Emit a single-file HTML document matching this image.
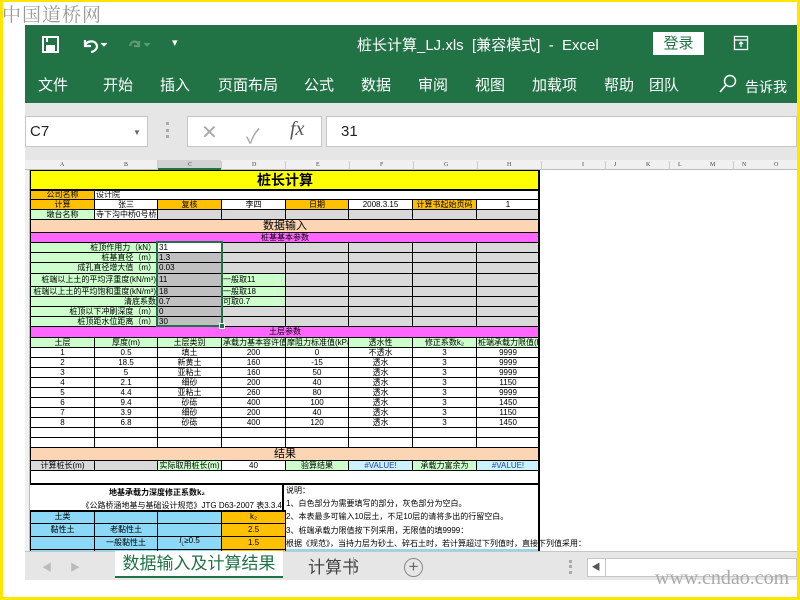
<!DOCTYPE html>
<html><head><meta charset="utf-8">
<style>
*{margin:0;padding:0;box-sizing:border-box}
body{width:800px;height:600px;overflow:hidden;background:#fff;position:relative;font-family:"Liberation Sans","Noto Sans CJK SC",sans-serif}
.a{position:absolute}
#ybor{position:absolute;left:0;top:0;width:800px;height:600px;border:3px solid #ffe600;border-top-width:2px;pointer-events:none;z-index:50}
.tb{background:#217346;color:#fff}
table{border-collapse:collapse;table-layout:fixed;position:absolute}
td{border:1px solid #000;font-size:8px;line-height:8px;text-align:center;white-space:nowrap;overflow:hidden;padding:0 1px}
.y{background:#ffff00}.o{background:#ffc000}.g{background:#ccffcc}.gr{background:#d9d9d9}.gc{background:#c0c0c0}.p{background:#fcd5b4}.m{background:#ff66ff}.lb{background:#ccf2ff;color:#2040a0}.bl{background:#8bd9f7}
.l{text-align:left}.r{text-align:right}
.tab{font-size:15px;position:absolute;top:74px;color:#fff}
</style></head><body>
<div id="ybor"></div>
<div class="a" style="left:2px;top:0;font-family:'Liberation Serif','Noto Serif CJK SC',serif;font-size:19px;color:#999;letter-spacing:1px">中国道桥网</div>

<!-- title bar -->
<div class="a tb" style="left:25px;top:25px;width:772px;height:78px"></div>
<svg class="a" style="left:41px;top:35px" width="20" height="20" viewBox="0 0 20 20" fill="none" stroke="#fff" stroke-width="2"><rect x="2" y="2" width="15" height="15"/><rect x="6" y="11" width="7" height="6" fill="#fff"/><line x1="6" y1="2" x2="6" y2="7"/></svg>
<svg class="a" style="left:80px;top:35px" width="30" height="20" viewBox="0 0 30 20" fill="none" stroke="#fff" stroke-width="2.2"><path d="M5 5 L5 11 L11 11 M5 10 C8 5 16 5 17 11 C17 15 13 17 11 17"/><path d="M21 8 l3 3 l3-3" fill="#fff" stroke-width="1"/></svg>
<svg class="a" style="left:122px;top:35px" width="30" height="20" viewBox="0 0 30 20" fill="none" stroke="#5c9a76" stroke-width="2.2"><path d="M17 11 C16 5 9 5 8 11 M17 6 L17 11 L12 11"/><path d="M22 8 l3 3 l3-3" fill="#5c9a76" stroke-width="1"/></svg>
<div class="a" style="left:172px;top:36px;color:#fff;font-size:11px">▾</div>
<div class="a" style="left:357px;top:34px;color:#fff;font-size:15px">桩长计算_LJ.xls&nbsp; [兼容模式]&nbsp; -&nbsp; Excel</div>
<div class="a" style="left:653px;top:32px;width:51px;height:23px;background:#fff;color:#217346;font-size:15px;text-align:center;line-height:23px">登录</div>
<svg class="a" style="left:733px;top:35px" width="16" height="16" fill="none" stroke="#fff" stroke-width="1.3"><rect x="1.5" y="1.5" width="13" height="13"/><line x1="1.5" y1="5" x2="14.5" y2="5"/><path d="M8 12V7M6 9l2-2 2 2"/></svg>
<div class="tab" style="left:38px">文件</div>
<div class="tab" style="left:103px">开始</div>
<div class="tab" style="left:160px">插入</div>
<div class="tab" style="left:218px">页面布局</div>
<div class="tab" style="left:304px">公式</div>
<div class="tab" style="left:361px">数据</div>
<div class="tab" style="left:418px">审阅</div>
<div class="tab" style="left:475px">视图</div>
<div class="tab" style="left:532px">加载项</div>
<div class="tab" style="left:604px">帮助</div>
<div class="tab" style="left:649px">团队</div>
<svg class="a" style="left:718px;top:74px" width="20" height="20" fill="none" stroke="#fff" stroke-width="1.5"><circle cx="12" cy="7" r="5.5"/><line x1="8" y1="11" x2="2" y2="18"/></svg>
<div class="tab" style="left:745px;top:77px;font-size:14px">告诉我</div>

<!-- formula bar -->
<div class="a" style="left:25px;top:103px;width:772px;height:57px;background:#e6e6e6"></div>
<div class="a" style="left:25px;top:116px;width:123px;height:31px;background:#fff;border:1px solid #c6c6c6;font-size:15px;line-height:29px;padding-left:4px;color:#222">C7</div>
<div class="a" style="left:133px;top:128px;font-size:8px;color:#666">▼</div>
<div class="a" style="left:166px;top:122px;width:3px;height:16px;border-left:3px dotted #aaa"></div>
<div class="a" style="left:187px;top:116px;width:135px;height:31px;background:#fff;border:1px solid #c6c6c6"></div>
<div class="a" style="left:201px;top:120px;font-size:20px;color:#aaa">✕</div>
<div class="a" style="left:246px;top:120px;font-size:20px;color:#aaa">✓</div>
<div class="a" style="left:290px;top:118px;font-size:20px;font-style:italic;font-family:'Liberation Serif',serif;color:#555">fx</div>
<div class="a" style="left:326px;top:116px;width:471px;height:31px;background:#fff;border:1px solid #c6c6c6;font-size:15px;line-height:29px;padding-left:14px;color:#222">31</div>

<!-- headers -->
<div class="a" style="left:25px;top:160px;width:772px;height:10px;background:#f0f0f0;border-bottom:1px solid #bbb"></div>
<div class="a" style="left:25px;top:170px;width:5px;height:381px;background:#f0f0f0;border-right:1px solid #bbb"></div>
<div class="a" style="left:157px;top:160px;width:64px;height:10px;background:#d2d2d2;border-bottom:2px solid #217346"></div>
<div class="a" style="left:30px;top:161px;width:770px;font-size:6px;color:#444;font-family:'Liberation Serif',serif;line-height:8px;white-space:nowrap">
<span class="a" style="left:30px">A</span><span class="a" style="left:94px">B</span><span class="a" style="left:158px">C</span><span class="a" style="left:222px">D</span><span class="a" style="left:286px">E</span><span class="a" style="left:350px">F</span><span class="a" style="left:414px">G</span><span class="a" style="left:477px">H</span><span class="a" style="left:552px">I</span><span class="a" style="left:584px">J</span><span class="a" style="left:616px">K</span><span class="a" style="left:648px">L</span><span class="a" style="left:680px">M</span><span class="a" style="left:712px">N</span><span class="a" style="left:744px">O</span></div>
<div class="a" style="left:94px;top:161px;width:700px;height:9px;background:repeating-linear-gradient(90deg,transparent 0 63px,#ccc 63px 64px);"></div>

<!-- grid -->
<table style="left:30px;top:170px;width:509px">
<colgroup><col style="width:64px"><col style="width:63px"><col style="width:64px"><col style="width:64px"><col style="width:63px"><col style="width:64px"><col style="width:64px"><col style="width:63px"></colgroup>
<tr style="height:19px"><td colspan="8" class="y" style="font-size:14px;line-height:14px;font-weight:bold;border-bottom:2px solid #000">桩长计算</td></tr>
<tr style="height:10px"><td class="o">公司名称</td><td colspan="7" class="l">设计院</td></tr>
<tr style="height:10px"><td class="o">计算</td><td>张三</td><td class="o">复核</td><td>李四</td><td class="o">日期</td><td>2008.3.15</td><td class="o">计算书起始页码</td><td>1</td></tr>
<tr style="height:10px"><td class="g">墩台名称</td><td>寺下沟中桥0号桥台</td><td class="gr"></td><td class="gr"></td><td class="gr"></td><td class="gr"></td><td class="gr"></td><td class="gr"></td></tr>
<tr style="height:13px"><td colspan="8" class="p" style="font-size:11px;line-height:11px">数据输入</td></tr>
<tr style="height:10px"><td colspan="8" class="m">桩基基本参数</td></tr>
<tr style="height:10px"><td colspan="2" class="g r">桩顶作用力（kN）</td><td class="l" style="background:#fff">31</td><td class="gr"></td><td class="gr"></td><td class="gr"></td><td class="gr"></td><td class="gr"></td></tr>
<tr style="height:10px"><td colspan="2" class="g r">桩基直径（m）</td><td class="gc l">1.3</td><td class="gr"></td><td class="gr"></td><td class="gr"></td><td class="gr"></td><td class="gr"></td></tr>
<tr style="height:11px"><td colspan="2" class="g r">成孔直径增大值（m）</td><td class="gc l">0.03</td><td class="gr"></td><td class="gr"></td><td class="gr"></td><td class="gr"></td><td class="gr"></td></tr>
<tr style="height:13px"><td colspan="2" class="g r">桩端以上土的平均浮重度(kN/m³)</td><td class="gc l">11</td><td class="g l">一般取11</td><td class="gr"></td><td class="gr"></td><td class="gr"></td><td class="gr"></td></tr>
<tr style="height:10px"><td colspan="2" class="g r">桩端以上土的平均饱和重度(kN/m³)</td><td class="gc l">18</td><td class="g l">一般取18</td><td class="gr"></td><td class="gr"></td><td class="gr"></td><td class="gr"></td></tr>
<tr style="height:10px"><td colspan="2" class="g r">清底系数</td><td class="gc l">0.7</td><td class="g l">可取0.7</td><td class="gr"></td><td class="gr"></td><td class="gr"></td><td class="gr"></td></tr>
<tr style="height:10px"><td colspan="2" class="g r">桩顶以下冲刷深度（m）</td><td class="gc l">0</td><td class="gr"></td><td class="gr"></td><td class="gr"></td><td class="gr"></td><td class="gr"></td></tr>
<tr style="height:10px"><td colspan="2" class="g r">桩顶距水位距离（m）</td><td class="gc l">30</td><td class="gr"></td><td class="gr"></td><td class="gr"></td><td class="gr"></td><td class="gr"></td></tr>
<tr style="height:11px"><td colspan="8" class="m">土层参数</td></tr>
<tr style="height:10px" class="g"><td>土层</td><td>厚度(m)</td><td>土层类别</td><td>承载力基本容许值(kPa)</td><td>摩阻力标准值(kPa)</td><td>透水性</td><td>修正系数k₂</td><td>桩端承载力限值(kPa)</td></tr>
<tr style="height:10px"><td>1</td><td>0.5</td><td>填土</td><td>200</td><td>0</td><td>不透水</td><td>3</td><td>9999</td></tr>
<tr style="height:10px"><td>2</td><td>18.5</td><td>新黄土</td><td>160</td><td>-15</td><td>透水</td><td>3</td><td>9999</td></tr>
<tr style="height:10px"><td>3</td><td>5</td><td>亚粘土</td><td>160</td><td>50</td><td>透水</td><td>3</td><td>9999</td></tr>
<tr style="height:10px"><td>4</td><td>2.1</td><td>细砂</td><td>200</td><td>40</td><td>透水</td><td>3</td><td>1150</td></tr>
<tr style="height:10px"><td>5</td><td>4.4</td><td>亚粘土</td><td>260</td><td>80</td><td>透水</td><td>3</td><td>9999</td></tr>
<tr style="height:10px"><td>6</td><td>9.4</td><td>砂砾</td><td>400</td><td>100</td><td>透水</td><td>3</td><td>1450</td></tr>
<tr style="height:10px"><td>7</td><td>3.9</td><td>细砂</td><td>200</td><td>40</td><td>透水</td><td>3</td><td>1150</td></tr>
<tr style="height:10px"><td>8</td><td>6.8</td><td>砂砾</td><td>400</td><td>120</td><td>透水</td><td>3</td><td>1450</td></tr>
<tr style="height:10px"><td></td><td></td><td></td><td></td><td></td><td></td><td></td><td></td></tr>
<tr style="height:10px"><td></td><td></td><td></td><td></td><td></td><td></td><td></td><td></td></tr>
<tr style="height:13px"><td colspan="8" class="p" style="font-size:11px;line-height:11px">结果</td></tr>
<tr style="height:10px"><td class="gr">计算桩长(m)</td><td class="gr"></td><td class="g">实际取用桩长(m)</td><td>40</td><td class="g">验算结果</td><td class="lb">#VALUE!</td><td class="g">承载力富余为</td><td class="lb">#VALUE!</td></tr>
<tr style="height:13px"><td colspan="8" style="border-bottom:2px solid #000"></td></tr>
</table>
<div class="a" style="left:538px;top:170px;width:2px;height:381px;background:#000"></div>
<!-- selection -->
<div class="a" style="left:156px;top:241px;width:67px;height:86px;border:2px solid #217346"></div>
<div class="a" style="left:219px;top:323px;width:6px;height:6px;background:#217346;border:1px solid #fff"></div>

<!-- lower -->
<div class="a" style="left:30px;top:484px;width:254px;height:26px;border-right:2px solid #000;font-size:8px">
<div style="position:absolute;top:3px;left:0;width:254px;text-align:center;font-weight:bold">地基承载力深度修正系数k₂</div>
<div style="position:absolute;top:16px;right:0;white-space:nowrap">《公路桥涵地基与基础设计规范》JTG D63-2007 表3.3.4</div></div>
<table style="left:30px;top:510px;width:255px;border-top:2px solid #000">
<colgroup><col style="width:64px"><col style="width:63px"><col style="width:64px"><col style="width:64px"></colgroup>
<tr style="height:12px"><td class="bl">土类</td><td class="bl"></td><td class="bl"></td><td class="o">k₂</td></tr>
<tr style="height:13px"><td class="bl">黏性土</td><td class="bl">老黏性土</td><td class="bl"></td><td class="o">2.5</td></tr>
<tr style="height:13px"><td class="bl"></td><td class="bl">一般黏性土</td><td class="bl"><i>I</i><sub style="font-size:5px">L</sub>≥0.5</td><td class="o">1.5</td></tr>
<tr style="height:12px"><td class="bl"></td><td class="bl"></td><td class="bl"></td><td class="o"></td></tr>
</table>
<div class="a" style="left:286px;top:484px;font-size:8px;line-height:13.2px;white-space:nowrap;width:253px;overflow:visible">说明：<br>1、白色部分为需要填写的部分，灰色部分为空白。<br>2、本表最多可输入10层土，不足10层的请将多出的行留空白。<br>3、桩端承载力限值按下列采用，无限值的填9999：<br>根据《规范》，当持力层为砂土、碎石土时，若计算超过下列值时，直接下列值采用：</div>
<div class="a" style="left:286px;top:549px;width:252px;height:4px;background:#8bd9f7"></div>

<!-- sheet tabs -->
<div class="a" style="left:25px;top:551px;width:772px;height:29px;background:#e6e6e6;border-top:1px solid #c6c6c6"></div>
<div class="a" style="left:42px;top:559px;font-size:10px;color:#bbb">◀</div>
<div class="a" style="left:70px;top:559px;font-size:10px;color:#bbb">▶</div>
<div class="a" style="left:115px;top:551px;width:168px;height:27px;background:#fff;border-bottom:2px solid #217346;color:#217346;font-size:17px;text-align:center;line-height:25px">数据输入及计算结果</div>
<div class="a" style="left:308px;top:553px;color:#444;font-size:17px">计算书</div>
<div class="a" style="left:353px;top:557px;width:1px;height:18px;background:#aaa"></div>
<div class="a" style="left:404px;top:558px;width:19px;height:19px;border:1.5px solid #888;border-radius:50%;color:#666;font-size:17px;line-height:15px;text-align:center">+</div>
<div class="a" style="left:569px;top:560px;width:3px;height:14px;border-left:3px dotted #aaa"></div>
<div class="a" style="left:587px;top:558px;width:210px;height:19px;background:#fff;border:1px solid #c6c6c6"></div>
<div class="a" style="left:587px;top:558px;width:19px;height:19px;border-right:1px solid #c6c6c6;font-size:9px;color:#555;text-align:center;line-height:18px">◀</div>
<div class="a" style="left:655px;top:567px;font-family:'Liberation Serif',serif;font-size:20px;color:#aaa">www.cndao.com</div>
</body></html>
